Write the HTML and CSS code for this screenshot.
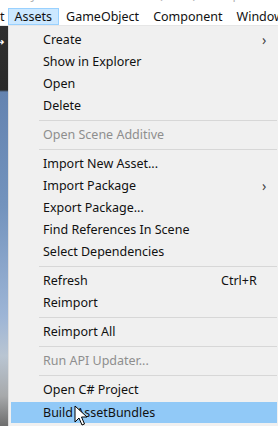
FILE: index.html
```html
<!DOCTYPE html>
<html lang="en">

<head>
    <meta charset="UTF-8" />
    <meta name="viewport" content="width=device-width, initial-scale=1.0" />
    <title>Assets Menu</title>
    <link rel="stylesheet" href="styles.css">
</head>

<body>
    <div class="title-bar">
        <span>Unity 2018.4.2f1 Personal (64bit) - SampleScene.unity - MyProject - PC, Mac &amp; Linux Standalone &lt;DX11&gt;</span>
    </div>

    <div class="menubar">
        <span class="mb-item mb-cut">t</span>
        <span class="mb-item active">Assets</span>
        <span class="mb-item">GameObject</span>
        <span class="mb-item">Component</span>
        <span class="mb-item">Window</span>
    </div>

    <div class="workspace">
        <div class="side">
            <span class="side-arrow">&#10140;</span>
        </div>
        <div class="menu">
            <div class="item">Create<span class="sub">&rsaquo;</span></div>
            <div class="item">Show in Explorer</div>
            <div class="item">Open</div>
            <div class="item">Delete</div>
            <div class="sep"></div>
            <div class="item disabled">Open Scene Additive</div>
            <div class="sep"></div>
            <div class="item">Import New Asset...</div>
            <div class="item">Import Package<span class="sub">&rsaquo;</span></div>
            <div class="item">Export Package...</div>
            <div class="item">Find References In Scene</div>
            <div class="item">Select Dependencies</div>
            <div class="sep"></div>
            <div class="item">Refresh<span class="shortcut">Ctrl+R</span></div>
            <div class="item">Reimport</div>
            <div class="sep"></div>
            <div class="item">Reimport All</div>
            <div class="sep"></div>
            <div class="item disabled">Run API Updater...</div>
            <div class="sep"></div>
            <div class="item">Open C# Project</div>
            <div class="item hover">Build AssetBundles</div>
        </div>

        <svg class="cursor" width="14" height="22" viewBox="0 0 14 22">
            <path d="M1 1 L1 17 L5 13 L8 20 L10.5 19 L7.5 12 L13 12 Z" fill="#fff" stroke="#000" stroke-width="1" stroke-linejoin="round" />
        </svg>
    </div>
</body>

</html>
```

FILE: styles.css
```css
:root {
    --menu-bg: #f0f0f0;
    --texto: #111;
    --cinza: #8e8e8e;
    --linha: #d7d7d7;
    --azul: #91c9f7;
}

body {
    margin: 0;
    width: 278px;
    height: 426px;
    overflow: hidden;
    background: #fff;
    font-family: 'Noto Sans', 'Open Sans', sans-serif;
    font-size: 12.5px;
    color: var(--texto);
}

.title-bar {
    height: 8px;
    overflow: hidden;
    white-space: nowrap;
    color: #b4b4b4;
    padding-left: 6px;
}

.title-bar span {
    display: block;
    margin-top: -13px;
    line-height: 15px;
}

.menubar {
    display: flex;
    height: 18px;
    white-space: nowrap;
    border-bottom: 1px solid #e6e6e6;
    box-sizing: border-box;
}

.mb-item {
    padding: 0 6px;
    line-height: 16px;
    border: 1px solid transparent;
}

.mb-cut {
    padding: 0 2px 0 0;
    margin-left: -1px;
}

.mb-item.active {
    background: #cce8ff;
    border-color: #99d1ff;
}

.workspace {
    position: relative;
    display: flex;
    height: 400px;
}

.side {
    width: 8px;
    flex-shrink: 0;
    background: linear-gradient(to bottom,
            #2e2e2e 0px, #2a2a2a 64px,
            #6483b0 66px, #7393bd 180px, #9db5d6 290px,
            #b9c5d2 330px, #a7a9ab 370px, #6e6e6e 400px);
    color: #fff;
    font-size: 9px;
    overflow: hidden;
}

.side-arrow {
    display: block;
    margin-top: 9px;
    margin-left: -3px;
}

.menu {
    flex: 1;
    background: var(--menu-bg);
    border-left: 1px solid #dcdcdc;
    padding: 3px 1px 0 2px;
}

.item {
    position: relative;
    height: 22px;
    line-height: 22px;
    padding-left: 32px;
    white-space: nowrap;
}

.item.disabled {
    color: var(--cinza);
}

.item.hover {
    background: var(--azul);
    height: 21px;
    line-height: 21px;
    margin-top: 1px;
}

.sub {
    position: absolute;
    left: 251px;
    font-size: 14px;
    color: #444;
}

.shortcut {
    position: absolute;
    left: 210px;
}

.sep {
    height: 7px;
    margin-left: 28px;
    display: flex;
    align-items: center;
}

.sep::after {
    content: "";
    flex: 1;
    height: 1px;
    background: var(--linha);
}

.cursor {
    position: absolute;
    left: 74px;
    top: 379px;
}
```
